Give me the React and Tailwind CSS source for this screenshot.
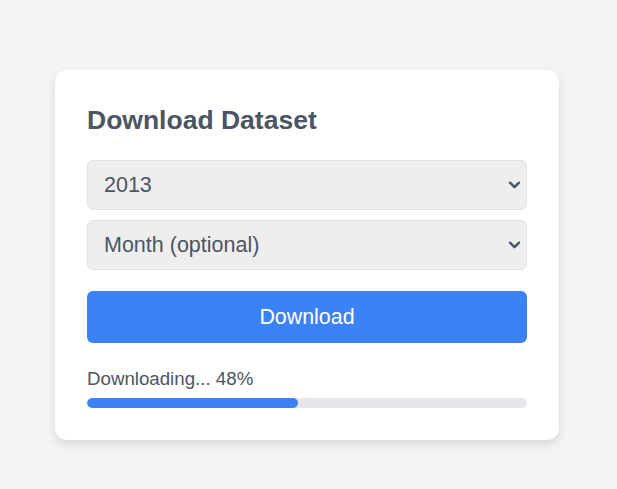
import React, { useState } from "react";

const Chevron = () => (
  <svg
    className="pointer-events-none absolute right-[6px] top-1/2 -translate-y-1/2 w-[13px] h-[9px]"
    viewBox="0 0 13 9"
    fill="none"
    stroke="#4b5563"
    strokeWidth="2.4"
    strokeLinecap="round"
    strokeLinejoin="round"
  >
    <path d="M2 2.2l4.5 4.5 4.5-4.5" />
  </svg>
);

const Select = ({ value, onChange, children }) => (
  <div className="relative">
    <select
      value={value}
      onChange={onChange}
      className="appearance-none w-full h-[50px] pl-4 pr-8 text-[21.5px] text-[#4b5563] bg-[#eeeeee] border border-[#e2e2e2] rounded-md outline-none"
    >
      {children}
    </select>
    <Chevron />
  </div>
);

const App = () => {
  const [year, setYear] = useState("2013");
  const [month, setMonth] = useState("");
  const progress = 48;

  return (
    <div className="min-h-screen bg-[#f3f4f6] flex justify-center pt-[70px] pr-[3px] font-['Liberation_Sans',Arial,sans-serif]">
      <div className="w-[504px] h-[370px] bg-white rounded-xl shadow-[0_4px_10px_rgba(0,0,0,0.12)] p-8">
        <h2 className="text-[26.5px] leading-8 font-bold text-[#4b5563] mt-[2px]">Download Dataset</h2>

        <div className="mt-[24px] flex flex-col gap-[10px]">
          <Select value={year} onChange={(e) => setYear(e.target.value)}>
            <option>2013</option>
            <option>2014</option>
            <option>2015</option>
          </Select>
          <Select value={month} onChange={(e) => setMonth(e.target.value)}>
            <option value="">Month (optional)</option>
            <option value="1">January</option>
            <option value="2">February</option>
          </Select>
        </div>

        <button className="mt-[21px] w-full h-[52px] bg-[#3b82f6] text-white text-[21.4px] rounded-md">
          Download
        </button>

        <p className="mt-[24px] text-[18.7px] leading-6 text-[#4b5563]">Downloading... {progress}%</p>
        <div className="mt-[7px] h-[10px] w-full bg-[#e5e7eb] rounded-full overflow-hidden">
          <div className="h-full bg-[#3b82f6] rounded-full" style={{ width: `${progress}%` }} />
        </div>
      </div>
    </div>
  );
};

export default App;
